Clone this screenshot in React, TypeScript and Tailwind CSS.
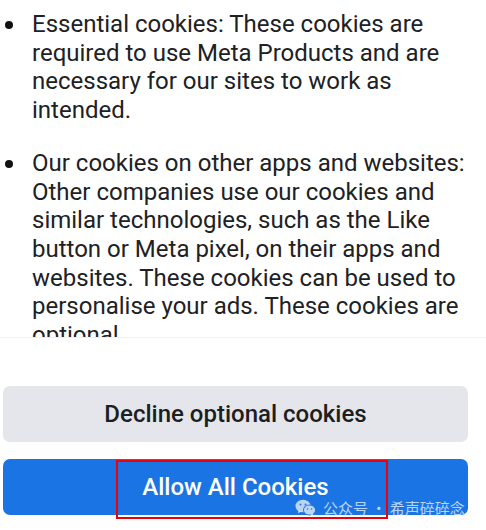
import React from "react"

const items = [
  "Essential cookies: These cookies are required to use Meta Products and are necessary for our sites to work as intended.",
  "Our cookies on other apps and websites: Other companies use our cookies and similar technologies, such as the Like button or Meta pixel, on their apps and websites. These cookies can be used to personalise your ads. These cookies are optional.",
]

function WeChatIcon() {
  return (
    <svg width="22" height="18" viewBox="0 0 22 18" fill="currentColor">
      <ellipse cx="8" cy="7" rx="7.5" ry="6.3" />
      <path d="M3.5 11.5 L2.8 14.5 L6.3 12.6 Z" />
      <ellipse cx="14.5" cy="11" rx="6.5" ry="5.4" fill="#1b74e4" />
      <ellipse cx="14.5" cy="11" rx="5.6" ry="4.6" />
      <path d="M17.5 14.5 L19 17 L15.5 15.4 Z" />
      <circle cx="5.5" cy="5.5" r="1" fill="#1b74e4" />
      <circle cx="10.5" cy="5.5" r="1" fill="#1b74e4" />
      <circle cx="12.6" cy="10" r="0.8" fill="#1b74e4" />
      <circle cx="16.6" cy="10" r="0.8" fill="#1b74e4" />
    </svg>
  )
}

export default function App() {
  return (
    <div
      className="w-[486px] h-[530px] bg-white overflow-hidden"
      style={{ fontFamily: "Roboto, 'Noto Sans', sans-serif" }}
    >
      {/* scrolling text, clipped at the bottom like the sheet */}
      <div className="h-[337px] overflow-hidden pt-[10px]">
        <ul className="flex flex-col gap-[24px]">
          {items.map((text, i) => (
            <li key={i} className="flex">
              <div className="w-[32px] shrink-0 pl-[5px] pt-[11px]">
                <div className="w-[8px] h-[8px] rounded-full bg-[#111]" />
              </div>
              <p className="w-[440px] text-[24px] leading-[28.7px] text-[#202124]">{text}</p>
            </li>
          ))}
        </ul>
      </div>
      <div className="h-px bg-[#f0f0f0]" />

      {/* buttons */}
      <div className="flex flex-col gap-[17px] px-[3px] pt-[48px] w-[468px]">
        <button className="h-[56px] w-[465px] rounded-[7px] bg-[#e4e6eb] text-[24px] font-medium text-[#1c1e21]">
          Decline optional cookies
        </button>
        <div className="relative">
          <button className="h-[56px] w-[465px] rounded-[7px] bg-[#1b74e4] text-[24px] font-medium text-white">
            Allow All Cookies
          </button>
          <div className="absolute left-[113px] top-[1px] w-[272px] h-[59px] border-[2px] border-[#e8000b]" />
          <div className="absolute left-[292px] top-[38px] flex items-center gap-[6px] text-[15px] text-white/70 whitespace-nowrap" style={{ fontFamily: "'Noto Sans CJK SC', sans-serif" }}>
            <WeChatIcon />
            <span>公众号 · 希声碎碎念</span>
          </div>
        </div>
      </div>
    </div>
  )
}
